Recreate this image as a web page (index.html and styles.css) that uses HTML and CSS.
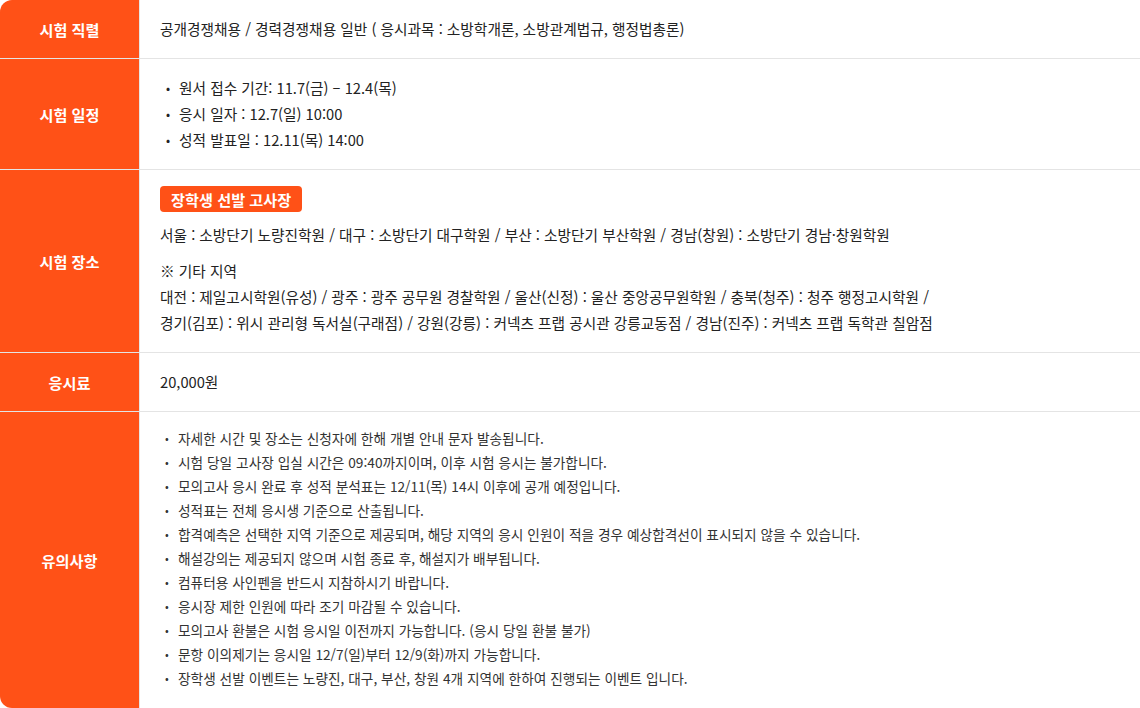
FILE: index.html
```html
<!DOCTYPE html>
<html lang="ko">
<head>
<meta charset="utf-8">
<link rel="stylesheet" href="styles.css">
</head>
<body>
<div class="table">
  <div class="row">
    <div class="label">시험 직렬</div>
    <div class="cell">공개경쟁채용 / 경력경쟁채용 일반 ( 응시과목 : 소방학개론, 소방관계법규, 행정법총론)</div>
  </div>
  <div class="row">
    <div class="label">시험 일정</div>
    <div class="cell">
      <ul class="list">
        <li>원서 접수 기간: 11.7(금) – 12.4(목)</li>
        <li>응시 일자 : 12.7(일) 10:00</li>
        <li>성적 발표일 : 12.11(목) 14:00</li>
      </ul>
    </div>
  </div>
  <div class="row">
    <div class="label">시험 장소</div>
    <div class="cell place">
      <span class="badge">장학생 선발 고사장</span>
      <p class="line">서울 : 소방단기 노량진학원 / 대구 : 소방단기 대구학원 / 부산 : 소방단기 부산학원 / 경남(창원) : 소방단기 경남·창원학원</p>
      <div class="etc">
        <p class="line">※ 기타 지역</p>
        <p class="line">대전 : 제일고시학원(유성) / 광주 : 광주 공무원 경찰학원 / 울산(신정) : 울산 중앙공무원학원 / 충북(청주) : 청주 행정고시학원 /</p>
        <p class="line">경기(김포) : 위시 관리형 독서실(구래점) / 강원(강릉) : 커넥츠 프랩 공시관 강릉교동점 / 경남(진주) : 커넥츠 프랩 독학관 칠암점</p>
      </div>
    </div>
  </div>
  <div class="row">
    <div class="label">응시료</div>
    <div class="cell">20,000원</div>
  </div>
  <div class="row">
    <div class="label">유의사항</div>
    <div class="cell notes-cell">
      <ul class="list notes">
        <li>자세한 시간 및 장소는 신청자에 한해 개별 안내 문자 발송됩니다.</li>
        <li>시험 당일 고사장 입실 시간은 09:40까지이며, 이후 시험 응시는 불가합니다.</li>
        <li>모의고사 응시 완료 후 성적 분석표는 12/11(목) 14시 이후에 공개 예정입니다.</li>
        <li>성적표는 전체 응시생 기준으로 산출됩니다.</li>
        <li>합격예측은 선택한 지역 기준으로 제공되며, 해당 지역의 응시 인원이 적을 경우 예상합격선이 표시되지 않을 수 있습니다.</li>
        <li>해설강의는 제공되지 않으며 시험 종료 후, 해설지가 배부됩니다.</li>
        <li>컴퓨터용 사인펜을 반드시 지참하시기 바랍니다.</li>
        <li>응시장 제한 인원에 따라 조기 마감될 수 있습니다.</li>
        <li>모의고사 환불은 시험 응시일 이전까지 가능합니다. (응시 당일 환불 불가)</li>
        <li>문항 이의제기는 응시일 12/7(일)부터 12/9(화)까지 가능합니다.</li>
        <li>장학생 선발 이벤트는 노량진, 대구, 부산, 창원 4개 지역에 한하여 진행되는 이벤트 입니다.</li>
      </ul>
    </div>
  </div>
</div>
</body>
</html>
```
FILE: styles.css
```css
*, *::before, *::after { box-sizing: border-box; }
html, body { margin: 0; padding: 0; background: #fff; }
body {
  font-family: "Noto Sans CJK KR", "Noto Sans", sans-serif;
  color: #222;
  font-size: 14.7px;
}
.table {
  width: 1140px;
  border-radius: 12px;
  overflow: hidden;
}
.row {
  display: grid;
  grid-template-columns: 140px 1fr;
  border-bottom: 1px solid #e4e4e4;
}
.row:last-child { border-bottom: none; }
.label {
  background: #ff5117;
  color: #fff;
  font-weight: 700;
  font-size: 15.2px;
  display: flex;
  align-items: center;
  justify-content: center;
  border-right: 1px solid #e4e4e4;
}
.cell {
  padding: 16px 20px;
  line-height: 26px;
  display: flex;
  flex-direction: column;
  justify-content: center;
}
.notes-cell { padding: 14px 20px 18px; }
.list { list-style: none; margin: 0; padding: 0; }
.list li { display: flex; }
.list li::before {
  content: "•";
  width: 19px;
  flex: none;
  padding-left: 6px;
  font-size: 12px;
}
.notes li { font-size: 13.7px; line-height: 24px; color: #333; }
.notes li::before { width: 18px; padding-left: 5px; font-size: 11px; }
.place { align-items: flex-start; }
.badge {
  display: inline-flex;
  align-items: center;
  height: 26px;
  padding: 0 11px;
  background: #ff5117;
  color: #fff;
  font-weight: 700;
  font-size: 15.2px;
  border-radius: 4px;
  margin-bottom: 10px;
}
.line { margin: 0; }
.etc { margin-top: 10px; }
```
